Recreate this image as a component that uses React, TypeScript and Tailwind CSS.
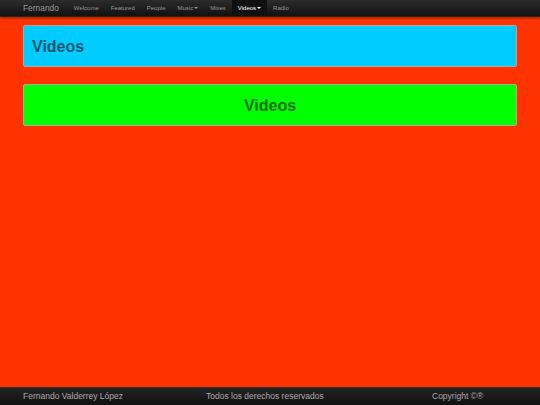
const navItems = [
  { label: "Welcome" },
  { label: "Featured" },
  { label: "People" },
  { label: "Music", caret: true },
  { label: "Mixes" },
  { label: "Videos", caret: true, active: true },
  { label: "Radio" },
];

const Caret = ({ active }: { active?: boolean }) => (
  <span
    className={`ml-[1px] inline-block h-0 w-0 border-x-[2px] border-t-[2px] border-x-transparent align-middle ${
      active ? "border-t-white" : "border-t-[#999]"
    }`}
  />
);

export default function App() {
  return (
    <div
      className="flex h-[405px] flex-col bg-[#ff3300]"
      style={{ fontFamily: '"Liberation Sans", Arial, sans-serif' }}
    >
      {/* navbar */}
      <nav className="h-[17px] border-b border-[#252525] bg-gradient-to-b from-[#2c2c2c] to-[#111] shadow-[0_1px_3px_rgba(0,0,0,0.4)]">
        <div className="mx-auto flex h-full w-[494px] items-stretch">
          <span className="flex items-center pr-[9px] text-[8.4px] text-[#999]">Fernando</span>
          <ul className="flex items-stretch">
            {navItems.map((n) => (
              <li
                key={n.label}
                className={`flex items-center px-[6px] text-[6px] ${
                  n.active ? "bg-[#111] text-white" : "text-[#999]"
                }`}
              >
                {n.label}
                {n.caret && <Caret active={n.active} />}
              </li>
            ))}
          </ul>
        </div>
      </nav>

      {/* content */}
      <main className="flex-1">
        <div className="mx-auto flex w-[494px] flex-col gap-[17px] pt-[8px]">
          <div className="flex h-[42px] items-center rounded-[2px] border border-[#b0a8a0] bg-[#00ccff] px-[8px] pt-[1px]">
            <h1 className="text-[16px] font-bold text-black/60">Videos</h1>
          </div>
          <div className="flex h-[42px] items-center justify-center rounded-[2px] border border-[#b0a8a0] bg-[#00ff00] pt-[1px]">
            <h1 className="text-[16px] font-bold text-black/60">Videos</h1>
          </div>
        </div>
      </main>

      {/* footer */}
      <footer className="h-[18px] border-t border-[#333] bg-gradient-to-b from-[#222] to-[#111]">
        <div className="mx-auto grid h-full w-[494px] grid-cols-3 items-center gap-[13px] text-[8.5px] text-[#aaa]">
          <span>Fernando Valderrey López</span>
          <span className="pl-[14px]">Todos los derechos reservados</span>
          <span className="pl-[71px]">Copyright ©®</span>
        </div>
      </footer>
    </div>
  );
}
